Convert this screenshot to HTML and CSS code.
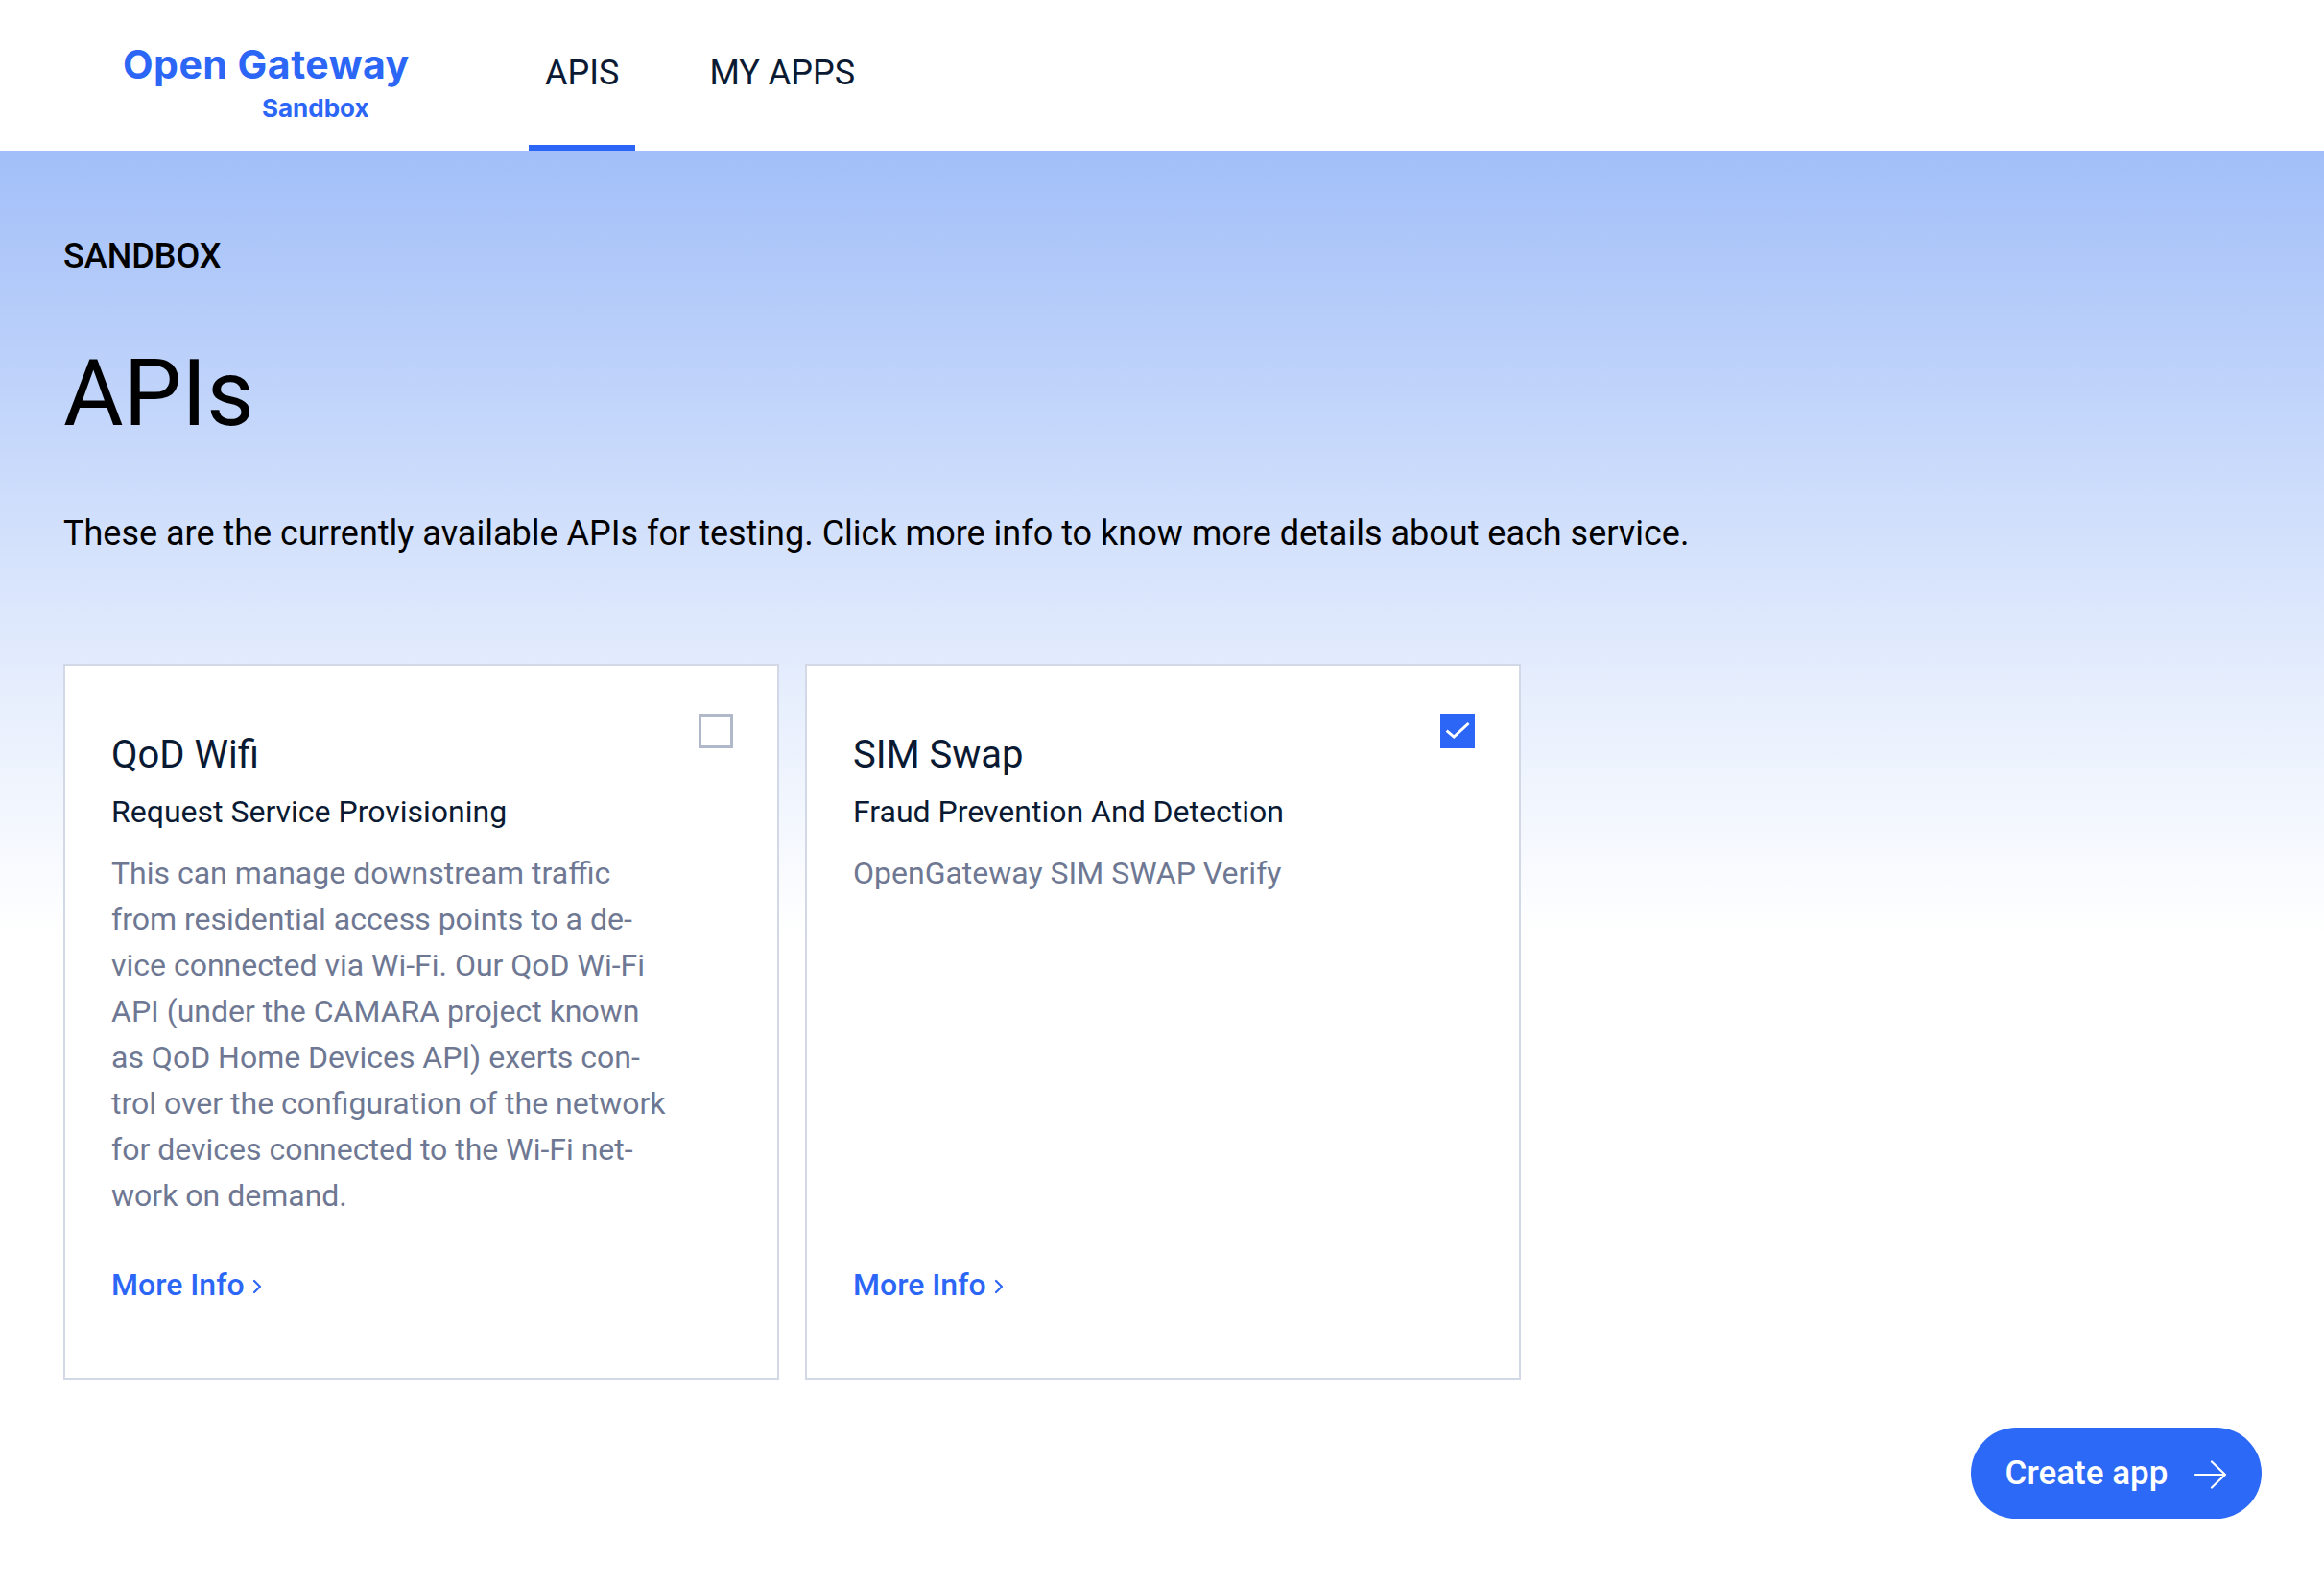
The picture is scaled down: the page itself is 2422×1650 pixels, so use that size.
FILE: index.html
```html
<!DOCTYPE html>
<html lang="en">
<head>
<meta charset="utf-8">
<title>Open Gateway Sandbox - APIs</title>
<link rel="stylesheet" href="styles.css">
</head>
<body>
<header class="topbar">
  <div class="logo">
    <span class="logo-main">Open Gateway</span>
    <span class="logo-sub">Sandbox</span>
  </div>
  <nav class="nav">
    <a class="nav-item active">APIS</a>
    <a class="nav-item">MY APPS</a>
  </nav>
</header>
<main class="hero">
  <div class="eyebrow">SANDBOX</div>
  <h1 class="title">APIs</h1>
  <p class="lead">These are the currently available APIs for testing. Click more info to know more details about each service.</p>
  <div class="cards">
    <article class="card">
      <div class="card-head">
        <h2 class="card-title">QoD Wifi</h2>
        <span class="checkbox"></span>
      </div>
      <div class="card-sub">Request Service Provisioning</div>
      <p class="card-desc">This can manage downstream traffic<br>from residential access points to a de-<br>vice connected via Wi-Fi. Our QoD Wi-Fi<br>API (under the CAMARA project known<br>as QoD Home Devices API) exerts con-<br>trol over the configuration of the network<br>for devices connected to the Wi-Fi net-<br>work on demand.</p>
      <a class="more">More Info<svg class="chev" viewBox="0 0 10 16" width="10" height="16"><path d="M2 2l6 6-6 6" fill="none" stroke="#2b66f6" stroke-width="2.2" stroke-linecap="round" stroke-linejoin="round"/></svg></a>
    </article>
    <article class="card">
      <div class="card-head">
        <h2 class="card-title">SIM Swap</h2>
        <span class="checkbox checked"><svg viewBox="0 0 24 24" width="34" height="34"><path d="M3.8 12.4L9 16.8 20.4 6.4" fill="none" stroke="#fff" stroke-width="2.3" stroke-linecap="square" stroke-linejoin="miter"/></svg></span>
      </div>
      <div class="card-sub">Fraud Prevention And Detection</div>
      <p class="card-desc">OpenGateway SIM SWAP Verify</p>
      <a class="more">More Info<svg class="chev" viewBox="0 0 10 16" width="10" height="16"><path d="M2 2l6 6-6 6" fill="none" stroke="#2b66f6" stroke-width="2.2" stroke-linecap="round" stroke-linejoin="round"/></svg></a>
    </article>
  </div>
  <div class="actions">
    <button class="btn">Create app <svg class="arrow" viewBox="0 0 34 30" width="34" height="30"><path d="M1 15h31M18 1.5l14 13.5-14 13.5" fill="none" stroke="#fff" stroke-width="2.2" stroke-linecap="round" stroke-linejoin="round"/></svg></button>
  </div>
</main>
</body>
</html>
```
FILE: styles.css
```css
* { box-sizing: border-box; }
html, body { margin: 0; padding: 0; }
body {
  font-family: Roboto, "Liberation Sans", sans-serif;
  color: #0b1a33;
  background: #fff;
  width: 2422px;
  min-height: 1650px;
}
.topbar {
  height: 157px;
  display: flex;
  align-items: stretch;
  padding-left: 128px;
  background: #fff;
}
.logo {
  display: flex;
  flex-direction: column;
  justify-content: center;
  width: 298px;
  margin-right: 125px;
  padding-top: 14px;
}
.logo-main {
  font-family: Inter, "Noto Sans", sans-serif;
  font-weight: 700;
  font-size: 41px;
  line-height: 46px;
  color: #2b66f6;
  letter-spacing: 0.5px;
  white-space: nowrap;
}
.logo-sub {
  font-family: Inter, "Noto Sans", sans-serif;
  font-weight: 700;
  font-size: 26px;
  line-height: 30px;
  color: #2b66f6;
  margin-left: 145px;
  margin-top: 8px;
}
.nav {
  display: flex;
  gap: 60px;
}
.nav-item {
  display: flex;
  align-items: center;
  padding: 0 17px 0;
  font-size: 36px;
  color: #0b1a33;
  border-bottom: 6px solid transparent;
}
.nav-item.active { border-bottom-color: #2b66f6; }
.hero {
  background: linear-gradient(180deg, #a2bff9 0px, #c6d8fb 300px, #e6eefd 560px, #ffffff 820px);
  padding: 90px 66px 68px;
}
.eyebrow {
  font-size: 36px;
  font-weight: 500;
  line-height: 40px;
  color: #000;
}
.title {
  margin: 68px 0 0;
  font-size: 96px;
  font-weight: 400;
  line-height: 110px;
  color: #000;
}
.lead {
  margin: 69px 0 0;
  font-size: 36px;
  line-height: 44px;
  color: #000;
}
.cards {
  display: flex;
  gap: 27px;
  margin-top: 114px;
}
.card {
  width: 746px;
  height: 746px;
  background: #fff;
  border: 2px solid #d3d8e6;
  padding: 67px 46px 0 48px;
  display: flex;
  flex-direction: column;
}
.card-head {
  display: flex;
  justify-content: space-between;
  align-items: flex-start;
}
.card-title {
  margin: 0;
  font-size: 40px;
  font-weight: 400;
  line-height: 52px;
  color: #0b1a33;
}
.checkbox {
  width: 36px;
  height: 36px;
  border: 3px solid #b1b8c9;
  margin-top: -17px;
  display: flex;
  align-items: center;
  justify-content: center;
}
.checkbox.checked {
  background: #2b66f6;
  border-color: #2b66f6;
}
.card-sub {
  margin-top: 11px;
  font-size: 32px;
  line-height: 44px;
  color: #0b1a33;
}
.card-desc {
  margin: 18px 0 0;
  font-size: 32px;
  line-height: 48px;
  color: #6e7893;
  flex: 1;
}
.more {
  display: flex;
  align-items: center;
  gap: 8px;
  font-size: 32px;
  font-weight: 500;
  color: #2b66f6;
  line-height: 44px;
  margin-bottom: 75px;
}
.chev { margin-top: 4px; }
.actions {
  display: flex;
  justify-content: flex-end;
  margin-top: 50px;
}
.btn {
  width: 303px;
  height: 95px;
  border: none;
  border-radius: 48px;
  background: #2b69f6;
  color: #fff;
  font-family: Roboto, "Liberation Sans", sans-serif;
  font-size: 35px;
  font-weight: 500;
  display: flex;
  align-items: center;
  justify-content: center;
  gap: 28px;
  margin-right: -1px;
}
.arrow { margin-top: 2px; }
```
